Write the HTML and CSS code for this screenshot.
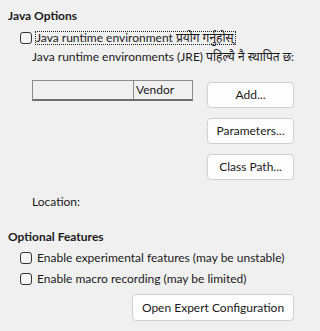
FILE: index.html
```html
<!DOCTYPE html>
<html>
<head>
<meta charset="utf-8">
<link rel="stylesheet" href="styles.css">
</head>
<body>
<div class="page">
  <div class="heading first">Java Options</div>
  <div class="cbrow cbrow-java">
    <span class="cb"></span>
    <span class="focus">Java runtime environment प्रयोग गर्नुहोस्</span>
  </div>
  <div class="indent jre-label">Java runtime environments (JRE) पहिल्यै नै स्थापित छ:</div>
  <div class="indent jre-area">
    <div class="table">
      <div class="thead">
        <div class="th th-name"></div>
        <div class="th th-vendor">Vendor</div>
      </div>
    </div>
    <div class="btncol">
      <div class="btn">Add...</div>
      <div class="btn">Parameters...</div>
      <div class="btn">Class Path...</div>
    </div>
  </div>
  <div class="indent location">Location:</div>
  <div class="heading second">Optional Features</div>
  <div class="cbrow cbrow-opt1">
    <span class="cb"></span>
    <span class="lbl">Enable experimental features (may be unstable)</span>
  </div>
  <div class="cbrow cbrow-opt2">
    <span class="cb"></span>
    <span class="lbl">Enable macro recording (may be limited)</span>
  </div>
  <div class="expert-row">
    <div class="btn btn-expert">Open Expert Configuration</div>
  </div>
</div>
</body>
</html>
```
FILE: styles.css
```css
html, body {
  margin: 0;
  padding: 0;
  background: #f0f0f0;
}
body {
  font-family: Lato, "Noto Sans", sans-serif;
  font-size: 12px;
  color: #1a1a1a;
  width: 304px;
  height: 331px;
  overflow: hidden;
  white-space: nowrap;
}
.page {
  display: flex;
  flex-direction: column;
  padding: 0 10px 0 8px;
}
.heading {
  font-weight: bold;
  line-height: 16px;
  height: 16px;
}
.heading.first { margin-top: 8px; }
.heading.second { margin-top: 19px; }
.cbrow {
  display: flex;
  align-items: center;
  height: 16px;
  margin-left: 12px;
  line-height: 16px;
}
.cbrow-java { margin-top: 6px; }
.cbrow-opt1 { margin-top: 5px; }
.cbrow-opt2 { margin-top: 5px; }
.cb {
  box-sizing: border-box;
  width: 12px;
  height: 12px;
  border: 1px solid #333;
  border-radius: 3px;
  background: #f6f6f6;
  flex: none;
}
.focus {
  margin-left: 3px;
  line-height: 12px;
  border: 1px dotted #222;
  padding: 0 1px 0 0;
}
.lbl {
  margin-left: 5px;
}
.indent {
  margin-left: 24px;
}
.jre-label {
  margin-top: 3px;
  line-height: 16px;
}
.jre-area {
  display: flex;
  gap: 14px;
  margin-top: 15px;
}
.table {
  width: 161px;
  flex: none;
}
.thead {
  display: flex;
  box-sizing: border-box;
  height: 21px;
  border: 1px solid #8c8c8c;
  border-bottom: 2px solid #6e6e6e;
}
.th {
  line-height: 18px;
  padding-left: 2px;
}
.th-name {
  width: 98px;
  border-right: 1px solid #8c8c8c;
}
.th-vendor {
  flex: 1;
}
.btncol {
  display: flex;
  flex-direction: column;
  gap: 10px;
  padding-top: 2px;
  width: 87px;
}
.btn {
  box-sizing: border-box;
  height: 26px;
  line-height: 24px;
  text-align: center;
  background: #fdfdfd;
  border: 1px solid #d0d0d0;
  border-radius: 4px;
}
.location {
  margin-top: 14px;
  line-height: 16px;
}
.expert-row {
  display: flex;
  justify-content: flex-end;
  margin-top: 7px;
}
.btn-expert {
  width: 162px;
  height: 27px;
  line-height: 25px;
}
```
